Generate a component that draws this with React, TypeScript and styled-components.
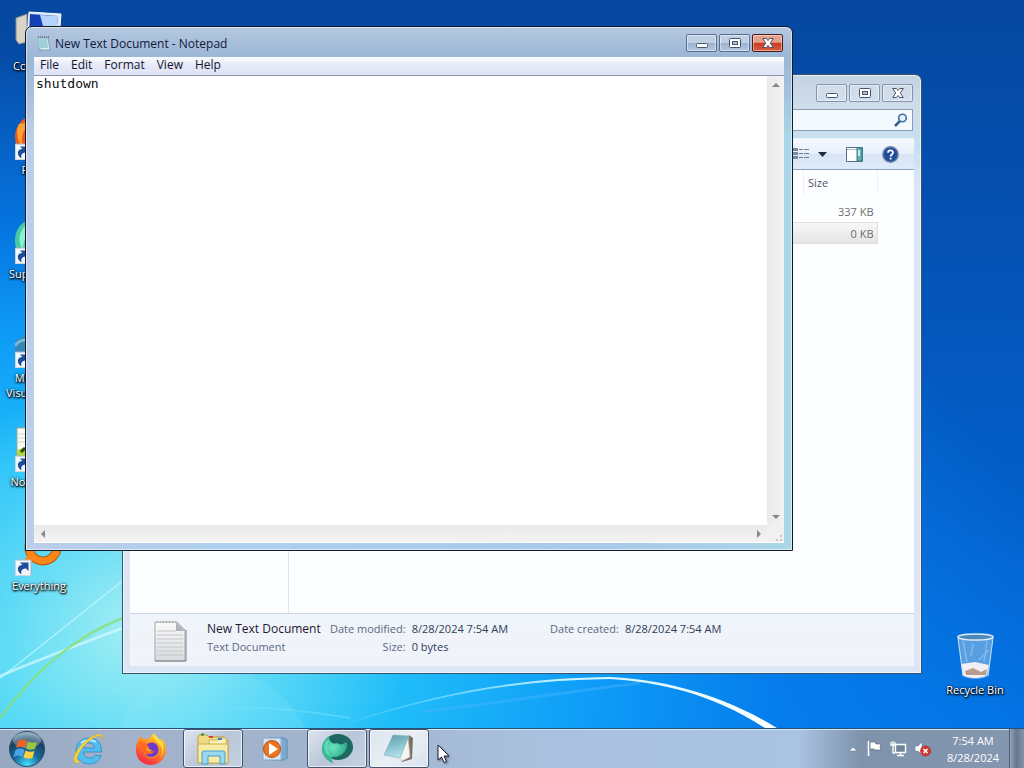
import React from "react";
import styled, { createGlobalStyle, css } from "styled-components";

const GlobalStyle = createGlobalStyle`
  * { box-sizing: border-box; }
  html, body { margin: 0; height: 100%; overflow: hidden; }
  body, button, input { font-family: "Open Sans", "Noto Sans", sans-serif; font-size: 11px; }
  button, input, textarea { margin: 0; padding: 0; border: 0; background: none; border-radius: 0; }
`;

const Screen = styled.div`
  display: grid;
  grid-template-rows: 1fr 40px;
  height: 100vh;
  overflow: hidden;
`;

const Desktop = styled.main`
  position: relative;
  overflow: hidden;
  background:
    radial-gradient(ellipse 26% 34% at 14% 86%, rgba(215, 255, 240, 0.7), rgba(160, 245, 245, 0.4) 50%, rgba(120, 235, 250, 0) 100%),
    radial-gradient(ellipse 100% 88% at 4% 94%, #3ed0f6 0%, #20bef9 34%, #0e9cf8 54%, rgba(6, 130, 240, 0.7) 72%, rgba(4, 84, 190, 0) 100%),
    linear-gradient(180deg, #0648a0 0%, #0550b2 30%, #035ec8 65%, #0472e4 100%);
`;

const Wallpaper = styled.svg`
  position: absolute;
  inset: 0;
  width: 100%;
  height: 100%;
`;

const IconColumn = styled.div`
  position: relative;
  display: flex;
  flex-direction: column;
  width: 78px;
  padding-top: 8px;
`;

const DesktopIcon = styled.button`
  display: flex;
  flex-direction: column;
  align-items: center;
  gap: 2px;
  width: 78px;
  height: 104px;
  color: #fff;
  line-height: 15px;
  text-align: center;
  text-shadow: 0 1px 2px #000, 1px 1px 2px #000, 0 0 3px rgba(0, 0, 0, 0.7);
  svg { width: 48px; height: 48px; flex: none; }
`;

const BinSpot = styled.div`
  position: absolute;
  right: 10px;
  bottom: 0;
  ${DesktopIcon} { height: 96px; }
`;

const Window = styled.section<{ $active?: boolean }>`
  position: absolute;
  display: flex;
  flex-direction: column;
  border: 1px solid ${(p) => (p.$active ? "#101c28" : "#38556e")};
  border-radius: 7px 7px 0 0;
  box-shadow: inset 0 0 0 1px rgba(255, 255, 255, 0.55);
  overflow: hidden;
`;

const NotepadWindow = styled(Window)`
  inset: 26px 231px 177px 25px;
  padding: 0 8px 7px;
  background:
    linear-gradient(180deg, rgba(255, 255, 255, 0.25), rgba(255, 255, 255, 0) 30px),
    linear-gradient(180deg, #9cb6d6 0 34px, rgba(156, 182, 214, 0) 110px),
    linear-gradient(90deg, #bccdea 0%, #acd0ee 30%, #aac8e8 75%, #a9d6e8 100%);
`;

const ExplorerWindow = styled(Window)`
  inset: 74px 102px 54px 122px;
  padding: 0 7px 7px;
  background: linear-gradient(180deg, #c3d2e4 0, #cfdcea 30px, #c6dff0 70px, #dce6f2 110px, #dce6f4 100%);
`;

const TitleBar = styled.header<{ $tall?: boolean }>`
  display: flex;
  flex: none;
  align-items: center;
  height: ${(p) => (p.$tall ? "34px" : "30px")};
  padding: 2px 1px 0 2px;
  h1 { margin: 0; flex: 1; padding-left: 4px; font-size: 12px; font-weight: 400; color: #10183a; }
`;

const Captions = styled.div`
  display: flex;
  gap: 2px;
  margin-left: auto;
`;

const CaptionButton = styled.button<{ $kind?: "close" | "idle" }>`
  display: grid;
  place-items: center;
  width: 31px;
  height: 18px;
  border: 1px solid #5b6f8c;
  border-radius: 2px;
  box-shadow: inset 0 0 0 1px rgba(255, 255, 255, 0.45);
  background: linear-gradient(#c0d0e4 0 48%, #9cb2cf 52%, #b4c8e0);
  ${(p) => p.$kind === "close" && css`
    border-color: #4e1a1c;
    background: linear-gradient(#e8a08e 0 45%, #c83c22 52%, #d8603e);
  `}
  ${(p) => p.$kind === "idle" && css`
    border-color: #8494ac;
    background: rgba(215, 225, 238, 0.5);
  `}
`;

const MenuBar = styled.nav`
  display: flex;
  flex: none;
  align-items: flex-start;
  height: 19px;
  border-bottom: 1px solid #8a96b0;
  background: linear-gradient(#fbfcff, #e4e8f8 50%, #dfe3f5);
  button { padding: 0 6px; font-size: 12px; line-height: 15px; color: #14142c; }
`;

const EditArea = styled.div`
  display: grid;
  flex: 1;
  min-height: 0;
  grid-template: 1fr 17px / 1fr 17px;
  background: #ededed;
  border-bottom: 1px solid #fff;
`;

const TextPane = styled.textarea`
  display: block;
  width: 100%;
  height: 100%;
  padding: 0 2px;
  resize: none;
  outline: 0;
  overflow: hidden;
  background: #fff;
  color: #101010;
  font-family: "DejaVu Sans Mono", monospace;
  font-size: 13px;
  line-height: 16px;
`;

const ScrollTrack = styled.div<{ $across?: boolean }>`
  display: flex;
  flex-direction: ${(p) => (p.$across ? "row" : "column")};
  justify-content: space-between;
  background: linear-gradient(${(p) => (p.$across ? "180deg" : "90deg")}, #eaeaea, #f3f3f3);
  button { display: grid; place-items: center; width: 17px; height: 17px; }
`;

const GripCorner = styled.div`
  display: grid;
  place-items: end;
  background: #f0f0f1;
`;

const SearchRow = styled.div`
  display: flex;
  flex: none;
  justify-content: flex-end;
  height: 29px;
  padding-right: 1px;
`;

const SearchField = styled.label`
  display: flex;
  align-items: center;
  width: 200px;
  height: 22px;
  padding-right: 4px;
  border: 1px solid #8a9cb4;
  background: #f4f9fe;
  input { flex: 1; min-width: 0; outline: 0; }
`;

const CommandBar = styled.div`
  display: flex;
  flex: none;
  align-items: center;
  justify-content: flex-end;
  height: 32px;
  padding-right: 15px;
  border-top: 1px solid #e8f4fc;
  border-bottom: 1px solid #8fa2bc;
  background: linear-gradient(#f6faff, #e6effa 48%, #d8e5f5 52%, #dfeaf8);
  button { display: grid; place-items: center; height: 24px; }
  button + button { margin-left: 19px; }
  button:nth-child(2) { margin-left: 8px; }
`;

const Browser = styled.div`
  display: grid;
  flex: 1;
  min-height: 0;
  grid-template-columns: 159px 1fr;
  background: #fdfeff;
`;

const NavPane = styled.aside`
  border-right: 1px solid #dde4ee;
`;

const FileTable = styled.table`
  width: calc(100% - 36px);
  border-collapse: collapse;
  align-self: start;
  color: #6d6d6d;
  th { height: 25px; padding: 0 4px; font-weight: 400; text-align: left; color: #4c5566; border-right: 1px solid #eef1f6; }
  th:last-child { width: 74px; }
  td { height: 22px; padding: 0 4px; text-align: right; }
  tbody::before { content: ""; display: block; height: 5px; }
`;

const FileRow = styled.tr<{ $selected?: boolean }>`
  ${(p) => p.$selected && css`
    background: linear-gradient(#f8f8f8, #e4e4e4);
    outline: 1px solid #dedede;
    outline-offset: -1px;
  `}
`;

const DetailsPane = styled.footer`
  display: flex;
  flex: none;
  height: 53px;
  padding: 6px 0 0 24px;
  border-top: 1px solid #ccd6e2;
  background: linear-gradient(#eff5fa, #f1f3fa);
  color: #5a6880;
`;

const DocName = styled.div`
  width: 117px;
  margin-left: 20px;
  line-height: 18px;
  white-space: nowrap;
  strong { display: block; font-size: 12px; font-weight: 400; color: #241838; }
`;

const Facts = styled.dl<{ $gap: number }>`
  display: grid;
  grid-template-columns: auto auto;
  grid-auto-rows: 18px;
  column-gap: 6px;
  align-content: start;
  margin: 0 0 0 ${(p) => p.$gap}px;
  line-height: 18px;
  white-space: nowrap;
  dt { text-align: right; }
  dd { margin: 0; color: #2e3c58; }
`;

const Taskbar = styled.footer`
  display: flex;
  position: relative;
  border-top: 1px solid #24507c;
  box-shadow: inset 0 1px 0 #d5e8f5;
  background: linear-gradient(90deg, #96a8c2 0%, #a3b2ca 12%, #a2b4cf 35%, #a9c1de 52%, #a9c3e2 78%, #7f93ad 84%, #8496b0 100%);
`;

const StartButton = styled.button`
  display: grid;
  place-items: center;
  width: 54px;
  margin-right: 5px;
`;

const Tasks = styled.nav`
  display: flex;
  flex: 1;
  gap: 2px;
`;

const TaskButton = styled.button<{ $state?: "open" | "front" }>`
  display: grid;
  place-items: center;
  width: 60px;
  ${(p) => p.$state && css`
    border: 1px solid #42546c;
    border-radius: 3px;
    box-shadow: inset 0 0 0 1px rgba(255, 255, 255, 0.7);
    background: ${p.$state === "front"
      ? "linear-gradient(135deg, #dce4ee, #e9eff5 50%, #d8e2ee)"
      : "linear-gradient(135deg, #dde4ee, #b9c6d8 50%, #c5d2e2)"};
  `}
`;

const Tray = styled.div`
  display: flex;
  align-items: center;
  gap: 7px;
  button { display: grid; place-items: center; }
`;

const Clock = styled.time`
  display: block;
  width: 70px;
  color: #fff;
  line-height: 17px;
  text-align: center;
  span { display: block; }
`;

const ShowDesktop = styled.button`
  width: 15px;
  margin-left: 1px;
  border-left: 1px solid #4d6078;
  background: linear-gradient(90deg, #93a3b8, #64788f 45%, #8494aa);
`;

const Pointer = styled.svg`
  position: fixed;
  left: 437px;
  top: 744px;
  filter: drop-shadow(1px 1px 1px rgba(0, 0, 0, 0.45));
`;

const Shortcut = () => (
  <g>
    <path d="M0 32H16V48H0Z" fill="#f2f6fa" stroke="#aab6c4" />
    <path d="M6.500 46.500C1 43 2 37 7.500 37L5 34.500H13.500V43L11 40.500C7.500 40.500 5.500 42.500 6.500 46.500Z" fill="#1c4c9c" />
  </g>
);

const MinGlyph = () => (
  <svg width="12" height="10"><rect x="0.5" y="5.5" width="11" height="4" rx="1" fill="#fff" stroke="#46536a" /></svg>
);
const MaxGlyph = () => (
  <svg width="12" height="10">
    <rect x="0.5" y="0.5" width="11" height="9" rx="1" fill="#fff" stroke="#46536a" />
    <rect x="3.5" y="3.5" width="5" height="3" fill="#b4c4da" stroke="#46536a" />
  </svg>
);
const CloseGlyph = () => (
  <svg width="12" height="10">
    <path d="M.7 .5H4.300L6 2.500 7.700 .5H11.300L8.300 5 11.300 9.500H7.700L6 7.500 4.300 9.500H.7L3.700 5Z" fill="#fff" stroke="#4b5366" />
  </svg>
);
const Arrow = ({ d }: { d: string }) => (
  <svg width="8" height="8"><path d={d} fill="#85888c" /></svg>
);

const FirefoxArt = () => (
  <svg width="32" height="32" viewBox="0 0 32 32">
    <defs>
      <linearGradient id="ffx" x1="0.8" y1="0" x2="0.3" y2="1">
        <stop offset="0" stopColor="#ffe03c" /><stop offset="0.45" stopColor="#ff8a1e" /><stop offset="1" stopColor="#f4264e" />
      </linearGradient>
    </defs>
    <path d="M3 8C4 6 4 4 6 3C7 6 9 6 11 6C14 6 16 4 18 0C22 3 22 5 26 8C27 7 26 6 26 5C31 9 32 18 30 22C28 28 22 32 16 32C7 32 0 25 1 15C1 12 2 9 3 8Z" fill="url(#ffx)" />
    <circle cx="16.500" cy="17" r="8" fill="#ff9b22" />
    <path d="M11 12C13 10 20 7 23 14C25 20 21 24 16 24C12 24 10 21 10 18C13 20 16 19 17 17C13 17 14 13 11 12Z" fill="#6b3bd0" />
    <path d="M4 10C8 8 12 10 14 14C12 15 11 15 11 17C14 20 18 18 20 18C16 23 9 22 7 17Z" fill="#ff6a20" />
    <path d="M18 1C17 5 22 8 26 13C29 18 26 24 24 26C30 21 29 12 26 8C22 5 22 3 18 1Z" fill="#ffdf3a" />
  </svg>
);

const OrbArt = () => (
  <svg width="38" height="38" viewBox="0 0 38 38">
    <defs>
      <radialGradient id="orb" cx="0.5" cy="0.95" r="0.95">
        <stop offset="0" stopColor="#45e0ff" /><stop offset="0.4" stopColor="#176b9c" /><stop offset="0.75" stopColor="#194060" /><stop offset="1" stopColor="#7aa2bc" />
      </radialGradient>
    </defs>
    <circle cx="19" cy="19" r="17.500" fill="url(#orb)" stroke="#294a66" />
    <ellipse cx="19" cy="10" rx="14" ry="8" fill="#fff" opacity="0.28" />
    <path d="M10 11C13 9 16 9 19 11L17 18C14 16 11 16 8 18Z" fill="#f0622c" />
    <path d="M20 11.500C23 13 26 13 29 12L27 19C24 20 21 20 18 18.500Z" fill="#9ac83a" />
    <path d="M7.500 20C10 18 14 18 16.500 20L14.500 27C12 25 9 25 5.500 27Z" fill="#4aa4e8" />
    <path d="M17.500 20.500C20 22 24 22 26.500 21L24.500 28C22 29 18 29 15.500 27.500Z" fill="#fcd03c" />
  </svg>
);

const IeArt = () => (
  <svg width="34" height="34" viewBox="0 0 34 34">
    <path fillRule="evenodd" d="M29.500 20H11.500C11.500 24 14 26 18 26C20.500 26 22 25 23 23.500H29C27 29.500 23 32 17.500 32C9 32 4 26 4 19C4 11 10 6 17 6C25 6 30 11 29.500 20ZM11.500 16H22.500C22.500 13 20 11 17 11C14 11 11.500 13 11.500 16Z" fill="#52bdf0" stroke="#2c8ac4" strokeWidth="0.800" />
    <path d="M9 11C12 8 20 7 24 10" stroke="#b4ecff" strokeWidth="2" fill="none" />
    <path d="M30 8C32 3 29 1 24 3C14 6 3 18 2 27C2 32 6 32 9 29C5 30 4 28 6 23C10 14 19 6 26 4C29 3 30 4 30 8Z" fill="#f6d43c" stroke="#d8a820" strokeWidth="0.500" />
  </svg>
);

const FolderArt = () => (
  <svg width="34" height="32" viewBox="0 0 34 32">
    <path d="M2 4L3 2H11L13 4H28L29 7H32V30H2Z" fill="#f0dc84" stroke="#bf9d45" />
    <path d="M13 7H22L23 5H30V12H13Z" fill="#fbf1b8" stroke="#d0b25a" />
    <path d="M2 11H32V30H2Z" fill="#f8eba4" stroke="#c9aa50" />
    <path d="M5 1.500H8" stroke="#288a3c" strokeWidth="2" /><path d="M13 4H17" stroke="#d8402c" strokeWidth="2" /><path d="M22 6H26" stroke="#3884c8" strokeWidth="2" />
    <path d="M6 31V20C6 18 7 18 8 18H27C28 18 29 18 29 20V31H24V23H12V31Z" fill="#9ad8f2" stroke="#489cc6" />
  </svg>
);

const PlayerArt = () => (
  <svg width="28" height="26" viewBox="0 0 28 26">
    <path d="M9 2H24V24H9Z" fill="#a2cfec" stroke="#588fbc" /><path d="M22 2V24M26 3V23" stroke="#4a84b4" />
    <path d="M2 2H20V24H2Z" fill="#d4e4f2" stroke="#84a8c8" />
    <circle cx="11" cy="13" r="8.500" fill="#ee7420" stroke="#b9500f" /><path d="M8 7L17 13 8 19Z" fill="#fff" />
  </svg>
);

const SupermiumArt = () => (
  <svg width="34" height="32" viewBox="0 0 34 32">
    <defs><radialGradient id="sm" cx="0.45" cy="0.4" r="0.7"><stop offset="0" stopColor="#6ae4be" /><stop offset="1" stopColor="#1c9a7c" /></radialGradient></defs>
    <ellipse cx="18" cy="14" rx="15" ry="13" fill="#1d6860" />
    <path d="M9 3C3 7 0 15 3 21C5 26 9 28 14 31C10 26 11 23 16 24C20 23 23 21 25 18C27 15 28 12 26 9C23 12 20 12 17 10C13 12 9 9 9 3Z" fill="url(#sm)" />
    <path d="M6 8C3 14 5 21 10 23C7 17 7 12 9 7Z" fill="#62d8b4" />
  </svg>
);

const NotepadArt = () => (
  <svg width="34" height="32" viewBox="0 0 34 32">
    <defs><linearGradient id="pad" x1="0.200" y1="0" x2="0.500" y2="1"><stop offset="0" stopColor="#5c9fae" /><stop offset="1" stopColor="#b6e4ec" /></linearGradient></defs>
    <path d="M27 2L31 5 30 26 20 29 18 24Z" fill="#7b7268" />
    <path d="M26 4L28 24 20 28 17 24Z" fill="#f6f4ee" stroke="#c5c0b5" strokeWidth="0.600" />
    <path d="M11 2L27 3 18 25 2 22Z" fill="url(#pad)" stroke="#7fb2be" strokeWidth="0.600" />
  </svg>
);

const ComputerArt = () => (
  <svg viewBox="0 0 48 48">
    <path d="M1 10L12 6V34L4 36 1 32Z" fill="#d8d4c8" stroke="#8c8a84" />
    <path d="M14 4L46 6 44 32 12 30Z" fill="#dce8f8" stroke="#f4f8ff" />
    <path d="M15 6L43 8 41 28 14 27Z" fill="#1440b8" /><path d="M25 7L43 8 42 20 28 18Z" fill="#b4d4fc" />
  </svg>
);

const desktopItems = [
  { name: "Computer", art: <ComputerArt /> },
  { name: "Firefox", art: <svg viewBox="0 0 48 48"><circle cx="23" cy="25" r="23" fill="#ee5a1e" /><path d="M4 12C0 20 3 30 8 36C5 24 8 16 18 10Z" fill="#ffa034" /><Shortcut /></svg> },
  { name: "Supermium", art: <svg viewBox="0 0 48 48"><path d="M24 1C8 3 0 12 0 24C0 32 3 36 8 42L40 40C50 22 42 0 24 1Z" fill="#48cba2" /><path d="M10 10C3 18 3 26 8 34C8 22 14 14 24 8Z" fill="#8df0d0" /><Shortcut /></svg> },
  { name: "Microsoft Visual Studio", art: <svg viewBox="0 0 48 48"><path d="M0 22C4 15 30 12 48 18V40H0Z" fill="#3786b8" /><path d="M0 26C4 19 14 18 20 22" stroke="#7cb8d8" strokeWidth="3" fill="none" /><Shortcut /></svg> },
  { name: "Notepad++", art: <svg viewBox="0 0 48 48"><path d="M2 4H40V46H2Z" fill="#fafcf4" stroke="#9ca89c" /><path d="M3 10H40M3 14H40M3 18H40" stroke="#ccd8dc" /><path d="M2 26L20 20 40 30V40H2Z" fill="#b4d838" /><path d="M6 28L10 24" stroke="#304818" strokeWidth="3" /><Shortcut /></svg> },
  { name: "Everything", art: <svg viewBox="0 0 48 48"><circle cx="28" cy="19" r="14" fill="none" stroke="#b85408" strokeWidth="9" /><circle cx="28" cy="19" r="14" fill="none" stroke="#ff8618" strokeWidth="7" /><path d="M18 27L12 34" stroke="#ff8618" strokeWidth="7" /><Shortcut /></svg> },
];

const files = [{ size: "337 KB" }, { size: "0 KB", selected: true }];

function Notepad() {
  return (
    <NotepadWindow $active aria-label="Notepad">
      <TitleBar>
        <svg width="15" height="17" viewBox="0 0 15 17">
          <path d="M2 3H12L14 15H4Z" fill="#d8eef2" stroke="#7b98a6" strokeWidth="0.800" /><path d="M2 3H11L12 13H3Z" fill="#9fcfd8" />
          <path d="M2 2H13" stroke="#6d828e" strokeWidth="2" strokeDasharray="1 1" />
        </svg>
        <h1>New Text Document - Notepad</h1>
        <Captions>
          <CaptionButton aria-label="Minimize"><MinGlyph /></CaptionButton>
          <CaptionButton aria-label="Maximize"><MaxGlyph /></CaptionButton>
          <CaptionButton $kind="close" aria-label="Close"><CloseGlyph /></CaptionButton>
        </Captions>
      </TitleBar>
      <MenuBar>
        {["File", "Edit", "Format", "View", "Help"].map((m) => <button key={m}>{m}</button>)}
      </MenuBar>
      <EditArea>
        <TextPane aria-label="Document text" defaultValue="shutdown" spellCheck={false} />
        <ScrollTrack>
          <button aria-label="Scroll up"><Arrow d="M0 6L4 2 8 6Z" /></button>
          <button aria-label="Scroll down"><Arrow d="M0 2L4 6 8 2Z" /></button>
        </ScrollTrack>
        <ScrollTrack $across>
          <button aria-label="Scroll left"><Arrow d="M6 0L2 4 6 8Z" /></button>
          <button aria-label="Scroll right"><Arrow d="M2 0L6 4 2 8Z" /></button>
        </ScrollTrack>
        <GripCorner>
          <svg width="10" height="10"><path d="M6 3h2v2h-2zM6 7h2v2h-2zM2 7h2v2h-2z" fill="#c6c6ca" /></svg>
        </GripCorner>
      </EditArea>
    </NotepadWindow>
  );
}

function Explorer() {
  return (
    <ExplorerWindow aria-label="File explorer">
      <TitleBar $tall>
        <Captions>
          <CaptionButton $kind="idle" aria-label="Minimize"><MinGlyph /></CaptionButton>
          <CaptionButton $kind="idle" aria-label="Maximize"><MaxGlyph /></CaptionButton>
          <CaptionButton $kind="idle" aria-label="Close"><CloseGlyph /></CaptionButton>
        </Captions>
      </TitleBar>
      <SearchRow>
        <SearchField>
          <input type="search" aria-label="Search" />
          <svg width="14" height="14"><path d="M6 8L1 13" stroke="#3c5c8c" strokeWidth="2.500" /><circle cx="8.500" cy="5" r="3.800" fill="#e4f4ff" stroke="#3f6f9e" strokeWidth="1.600" /></svg>
        </SearchField>
      </SearchRow>
      <CommandBar>
        <button aria-label="Change your view">
          <svg width="18" height="12"><path d="M1 1.500H6M1 5.500H6M1 9.500H6" stroke="#7c8aa0" strokeWidth="3" /><path d="M7 1.500h4m1 0h5M7 5.500h4m1 0h5M7 9.500h4m1 0h5" stroke="#6d7c94" /></svg>
        </button>
        <button aria-label="More view options"><svg width="9" height="5"><path d="M0 0H9L4.500 5Z" fill="#1c2c48" /></svg></button>
        <button aria-label="Show the preview pane">
          <svg width="17" height="15"><path d="M.5.500H16.500V14.500H.5Z" fill="#fff" stroke="#566c88" /><path d="M1 2.500H16" stroke="#a4b8d0" /><path d="M11 1H16V14H11Z" fill="#5cb4b0" stroke="#3e7c88" /><path d="M12 3H14V9H12Z" fill="#c4ecec" /></svg>
        </button>
        <button aria-label="Help">
          <svg width="17" height="17"><circle cx="8.500" cy="8.500" r="7.700" fill="#244c9c" stroke="#7286a8" strokeWidth="1.400" /><path d="M6 6.800C6 3.600 11 3.600 11 6.600C11 8.500 8.600 8.400 8.600 10.400M8.600 11.800V13.600" stroke="#fff" strokeWidth="1.800" fill="none" /></svg>
        </button>
      </CommandBar>
      <Browser>
        <NavPane />
        <FileTable>
          <thead><tr><th aria-label="Name" /><th scope="col">Size</th></tr></thead>
          <tbody>{files.map((f) => <FileRow key={f.size} $selected={f.selected}><td /><td>{f.size}</td></FileRow>)}</tbody>
        </FileTable>
      </Browser>
      <DetailsPane>
        <svg width="33" height="42" viewBox="0 0 33 42">
          <defs><linearGradient id="sheet" x1="0" y1="0" x2="0" y2="1"><stop offset="0" stopColor="#fafafa" /><stop offset="1" stopColor="#d8dadd" /></linearGradient></defs>
          <path d="M1 2H23L31 10V41H1Z" fill="url(#sheet)" stroke="#a2a6aa" />
          <path d="M3 11H22M3 15H29M3 19H29M3 23H29M3 27H29M3 31H29M3 35H29" stroke="#c4c6c9" />
          <path d="M22 2V11H31Z" fill="#aeb3b8" /><path d="M1 41H32V10" stroke="#808488" fill="none" />
          <path d="M3 2H22" stroke="#888" strokeDasharray="1 2" />
        </svg>
        <DocName><strong>New Text Document</strong>Text Document</DocName>
        <Facts $gap={6}><dt>Date modified:</dt><dd>8/28/2024 7:54 AM</dd><dt>Size:</dt><dd>0 bytes</dd></Facts>
        <Facts $gap={42}><dt>Date created:</dt><dd>8/28/2024 7:54 AM</dd></Facts>
      </DetailsPane>
    </ExplorerWindow>
  );
}

export default function App() {
  return (
    <>
      <GlobalStyle />
      <Screen>
        <Desktop>
          <Wallpaper viewBox="0 0 1024 728" preserveAspectRatio="none">
            <defs>
              <linearGradient id="arc" x1="0" y1="0" x2="1" y2="0"><stop offset="0" stopColor="#8ee4ff" stopOpacity="0.200" /><stop offset="0.500" stopColor="#c8f4ff" /><stop offset="1" stopColor="#fff" /></linearGradient>
            </defs>
            <path d="M0 678C50 640 90 605 150 560" stroke="#c8faff" strokeWidth="1.500" fill="none" opacity="0.700" />
            <path d="M0 676C50 655 90 640 150 618" stroke="#dffcff" strokeWidth="2.500" fill="none" opacity="0.650" />
            <path d="M0 718C40 665 80 630 150 608" stroke="#86e07c" strokeWidth="2.500" fill="none" opacity="0.850" />
            <path d="M120 728C180 705 240 700 350 718" stroke="#70e0ff" strokeWidth="2" fill="none" opacity="0.500" />
            <path d="M120 728C130 690 160 674 200 674H240C270 680 290 700 306 728Z" fill="#a0ecff" opacity="0.130" />
            <path d="M420 712C520 700 580 690 640 683" stroke="#50b4ff" strokeWidth="3" fill="none" opacity="0.400" />
            <path d="M350 722C440 692 520 678 610 677C660 679 724 694 780 730L768 730C714 694 660 682 610 679C520 680 440 694 350 723Z" fill="url(#arc)" />
          </Wallpaper>
          <IconColumn>
            {desktopItems.map((d) => <DesktopIcon key={d.name}>{d.art}{d.name}</DesktopIcon>)}
          </IconColumn>
          <BinSpot>
            <DesktopIcon>
              <svg viewBox="0 0 48 48">
                <path d="M7 5H42L37 44C34 48 15 48 12 44Z" fill="#9cc4e4" opacity="0.550" />
                <path d="M10 32L24 30 38 33 36 43C32 47 16 47 12 43Z" fill="#f0f0f2" /><path d="M14 39L22 36 30 40 36 37 35 43H15Z" fill="#b89c90" />
                <path d="M12 9L16 30M36 9L33 30M22 12L20 24M38 18L28 28" stroke="#d4ecfc" strokeWidth="1.500" opacity="0.350" />
                <ellipse cx="24.500" cy="5" rx="17.500" ry="3" fill="#4c88b8" stroke="#dcecf8" strokeWidth="1.500" />
                <path d="M7 6L12 44M42 6L37 44" stroke="#cce0f2" />
              </svg>
              Recycle Bin
            </DesktopIcon>
          </BinSpot>
          <Explorer />
          <Notepad />
        </Desktop>
        <Taskbar>
          <StartButton aria-label="Start"><OrbArt /></StartButton>
          <Tasks>
            <TaskButton aria-label="Internet Explorer"><IeArt /></TaskButton>
            <TaskButton aria-label="Firefox"><FirefoxArt /></TaskButton>
            <TaskButton $state="open" aria-label="File Explorer"><FolderArt /></TaskButton>
            <TaskButton aria-label="Media Player"><PlayerArt /></TaskButton>
            <TaskButton $state="open" aria-label="Supermium"><SupermiumArt /></TaskButton>
            <TaskButton $state="front" aria-label="Notepad"><NotepadArt /></TaskButton>
          </Tasks>
          <Tray>
            <button aria-label="Show hidden icons"><svg width="12" height="8"><path d="M2 6L6 2 10 6Z" fill="#fff" stroke="#5d6d84" strokeWidth="0.500" /></svg></button>
            <button aria-label="Action Center"><svg width="17" height="17"><path d="M2.500 1V16" stroke="#fff" strokeWidth="1.600" /><path d="M4 2H9L10 4H15L14 7 15 10H9L8 9H4Z" fill="#fff" stroke="#4b5c74" strokeWidth="0.600" /></svg></button>
            <button aria-label="Network"><svg width="17" height="17"><path d="M5.500 4.500H15.500V12.500H5.500Z" fill="#71839d" stroke="#fff" strokeWidth="1.400" /><path d="M7 15.500H14M10.500 13V15M1 2V5H5V2M3 1V13H5" stroke="#fff" strokeWidth="1.300" fill="none" /></svg></button>
            <button aria-label="Volume muted"><svg width="17" height="17"><path d="M1 6H4L8 2V15L4 11H1Z" fill="#fff" stroke="#63728a" strokeWidth="0.500" /><circle cx="11.500" cy="11" r="5" fill="#d8382e" stroke="#a0201c" strokeWidth="0.600" /><path d="M9.500 9L13.500 13M13.500 9L9.500 13" stroke="#fff" strokeWidth="1.600" /></svg></button>
            <Clock><span>7:54 AM</span><span>8/28/2024</span></Clock>
          </Tray>
          <ShowDesktop aria-label="Show desktop" />
        </Taskbar>
      </Screen>
      <Pointer width="14" height="20"><path d="M1 1V16L4.500 13 7 18.500 9.500 17.500 7 12H12Z" fill="#fff" stroke="#16203a" /></Pointer>
    </>
  );
}
